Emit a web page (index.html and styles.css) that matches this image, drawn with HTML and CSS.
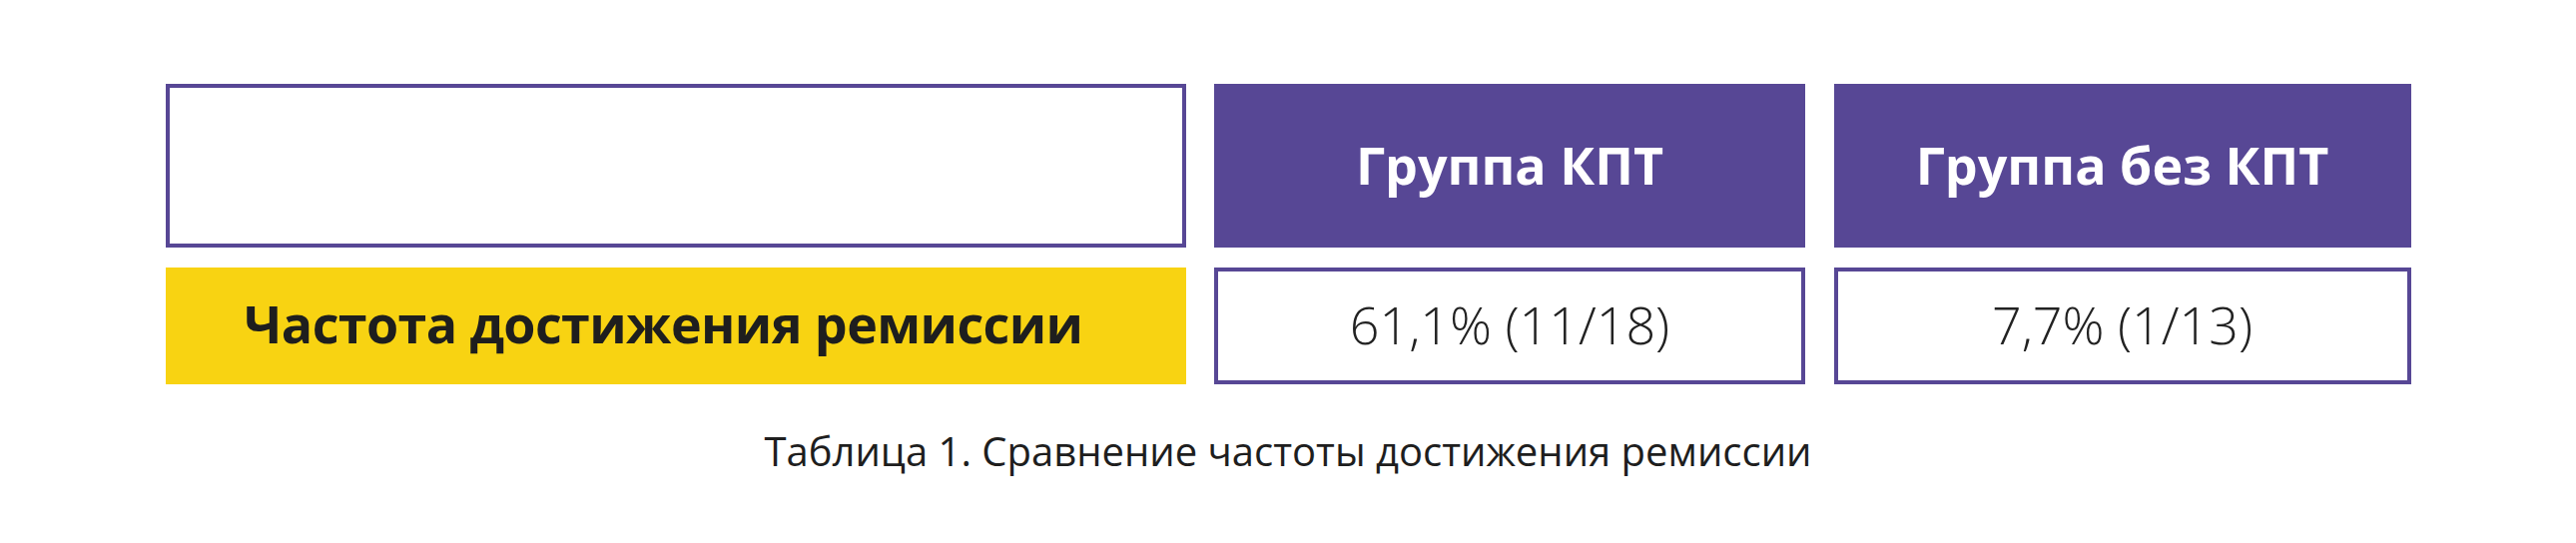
FILE: index.html
```html
<!DOCTYPE html>
<html lang="ru">
<head>
<meta charset="utf-8">
<title>Таблица 1</title>
<link rel="stylesheet" href="styles.css">
</head>
<body>
<main class="page">
  <figure class="figure">
    <div class="table">
      <div class="cell cell-empty"></div>
      <div class="cell cell-head">Группа КПТ</div>
      <div class="cell cell-head">Группа без КПТ</div>
      <div class="cell cell-label">Частота достижения ремиссии</div>
      <div class="cell cell-value">61,1% (11/18)</div>
      <div class="cell cell-value">7,7% (1/13)</div>
    </div>
    <figcaption class="caption">Таблица 1. Сравнение частоты достижения ремиссии</figcaption>
  </figure>
</main>
</body>
</html>
```
FILE: styles.css
```css
html, body {
  margin: 0;
  padding: 0;
  background: #ffffff;
}

.page {
  width: 2580px;
  height: 544px;
  padding-top: 84px;
  box-sizing: border-box;
  font-family: "Open Sans", "Noto Sans", "DejaVu Sans", sans-serif;
  color: #1e1e1e;
}

.figure {
  margin: 0 auto;
  width: 2249px;
}

.table {
  display: grid;
  grid-template-columns: 1022px 592px 578px;
  grid-template-rows: 164px 117px;
  column-gap: 28.5px;
  row-gap: 20px;
}

.cell {
  box-sizing: border-box;
  display: flex;
  align-items: center;
  justify-content: center;
  text-align: center;
  white-space: nowrap;
}

.cell-empty {
  border: 4px solid #574795;
  background: #ffffff;
}

.cell-head {
  background: #574795;
  color: #ffffff;
  font-weight: 700;
  font-size: 52px;
  padding-bottom: 4px;
}

.cell-label {
  background: #f8d312;
  color: #1e1e1e;
  font-weight: 700;
  font-size: 52px;
  letter-spacing: -0.6px;
  padding-bottom: 6px;
  padding-right: 24px;
}

.cell-value {
  border: 4px solid #574795;
  background: #ffffff;
  font-weight: 300;
  font-size: 52px;
  color: #222222;
  padding-bottom: 4px;
}

.caption {
  margin: 0;
  padding-top: 43px;
  text-align: center;
  font-size: 40px;
  font-weight: 400;
  color: #1e1e1e;
  line-height: 1.2;
}
```
